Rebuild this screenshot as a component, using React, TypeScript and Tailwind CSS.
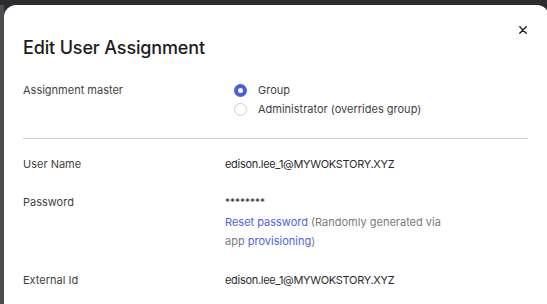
import React from "react";

export default function App() {
  return (
    <div className="w-[547px] h-[304px] overflow-hidden bg-[#2b2b30] relative" style={{ fontFamily: "Inter, 'Noto Sans', sans-serif" }}>
      <div className="absolute left-0 top-[5px] bottom-0 w-[4px] bg-[#4d4d4f]" />
      <div className="absolute left-[4px] top-[5px] w-[545px] h-[320px] bg-white rounded-[12px] pl-[19px] pr-[20px] pt-[29px]">
        <button className="absolute right-[22px] top-[21px] w-[8px] h-[8px] flex items-center justify-center">
          <svg width="8" height="8" viewBox="0 0 8 8" fill="none" stroke="#1f1f22" strokeWidth="1.4" strokeLinecap="round">
            <path d="M0.8 0.8L7.2 7.2M7.2 0.8L0.8 7.2" />
          </svg>
        </button>
        <h1 className="text-[18px] leading-[28px] font-medium text-[#1c1c1e] tracking-[-0.15px]">Edit User Assignment</h1>
        <div className="mt-[19px] flex text-[11px] leading-[19px]">
          <div className="w-[211px] text-[#3f3f42]">Assignment master</div>
          <div className="flex flex-col">
            <label className="flex items-center h-[19px] gap-[11px]">
              <span className="w-[13px] h-[13px] rounded-full bg-[#4a5de0] flex items-center justify-center">
                <span className="w-[5px] h-[5px] rounded-full bg-white" />
              </span>
              <span className="text-[#3f3f42]">Group</span>
            </label>
            <label className="flex items-center h-[19px] gap-[11px]">
              <span className="w-[13px] h-[13px] rounded-full border border-[#cfcfd3] bg-white" />
              <span className="text-[#3f3f42]">Administrator (overrides group)</span>
            </label>
          </div>
        </div>
        <div className="mt-[19px] h-px bg-[#d2d2d5] w-[505px]" />
        <div className="mt-[16px] flex text-[11px] leading-[19px]">
          <div className="w-[202px] text-[#3f3f42]">User Name</div>
          <div className="text-[#2c2c2e] tracking-[-0.3px]">edison.lee_1@MYWOKSTORY.XYZ</div>
        </div>
        <div className="mt-[19px] flex text-[11px] leading-[19.5px]">
          <div className="w-[202px] text-[#3f3f42]">Password</div>
          <div className="w-[224px]">
            <div className="text-[#2c2c2e] text-[10px]">********</div>
            <p className="text-[#7a7a7e]">
              <span className="text-[#4d63e8]">Reset password</span> (Randomly generated via app{" "}
              <span className="text-[#4d63e8]">provisioning</span>)
            </p>
          </div>
        </div>
        <div className="mt-[19.5px] flex text-[11px] leading-[19px]">
          <div className="w-[202px] text-[#3f3f42]">External Id</div>
          <div className="text-[#2c2c2e] tracking-[-0.3px]">edison.lee_1@MYWOKSTORY.XYZ</div>
        </div>
      </div>
    </div>
  );
}
